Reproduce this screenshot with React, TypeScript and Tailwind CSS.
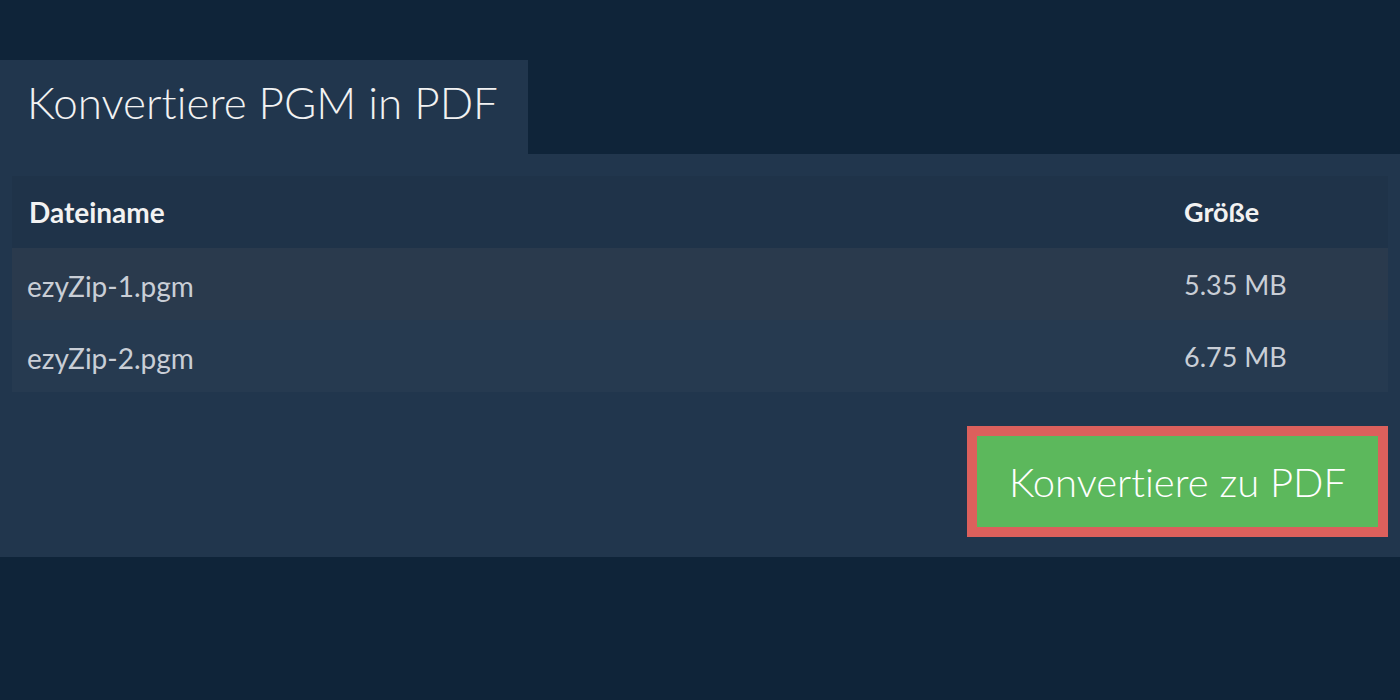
const files = [
  { name: 'ezyZip-1.pgm', size: '5.35 MB' },
  { name: 'ezyZip-2.pgm', size: '6.75 MB' },
];

export default function App() {
  return (
    <div className="min-h-[700px] bg-[#0f2439] pt-[60px] font-['Lato',sans-serif] [font-variant-ligatures:none]">
      {/* Tab */}
      <div className="w-[528px] h-[94px] bg-[#21364d] flex items-center pl-[27px] pb-[10px]">
        <h1 className="text-[44px] font-light text-[#f2f2f2] leading-none">Konvertiere PGM in PDF</h1>
      </div>

      {/* Panel */}
      <div className="bg-[#21364d] px-[12px] pt-[22px] pb-[20px]">
        <div className="w-full">
          <div className="flex items-center h-[72px] bg-[#1f3349] font-bold text-[#f2f2f2]">
            <div className="flex-1 pl-[17px] text-[28px]">Dateiname</div>
            <div className="w-[204px] text-[27px]">Größe</div>
          </div>
          {files.map((f, i) => (
            <div
              key={f.name}
              className={`flex items-center h-[72px] pt-[3px] text-[#c9ced6] ${i === 0 ? 'bg-[#2a3a4d]' : 'bg-[#263a50]'}`}
            >
              <div className="flex-1 pl-[15px] text-[28px]">{f.name}</div>
              <div className="w-[204px] text-[27px]">{f.size}</div>
            </div>
          ))}
        </div>

        <div className="flex justify-end mt-[34px]">
          <button className="border-[10px] border-[#dc605c] bg-[#5cb85c] w-[421px] h-[111px] text-[40px] font-light text-white leading-none">
            Konvertiere zu PDF
          </button>
        </div>
      </div>
    </div>
  );
}
